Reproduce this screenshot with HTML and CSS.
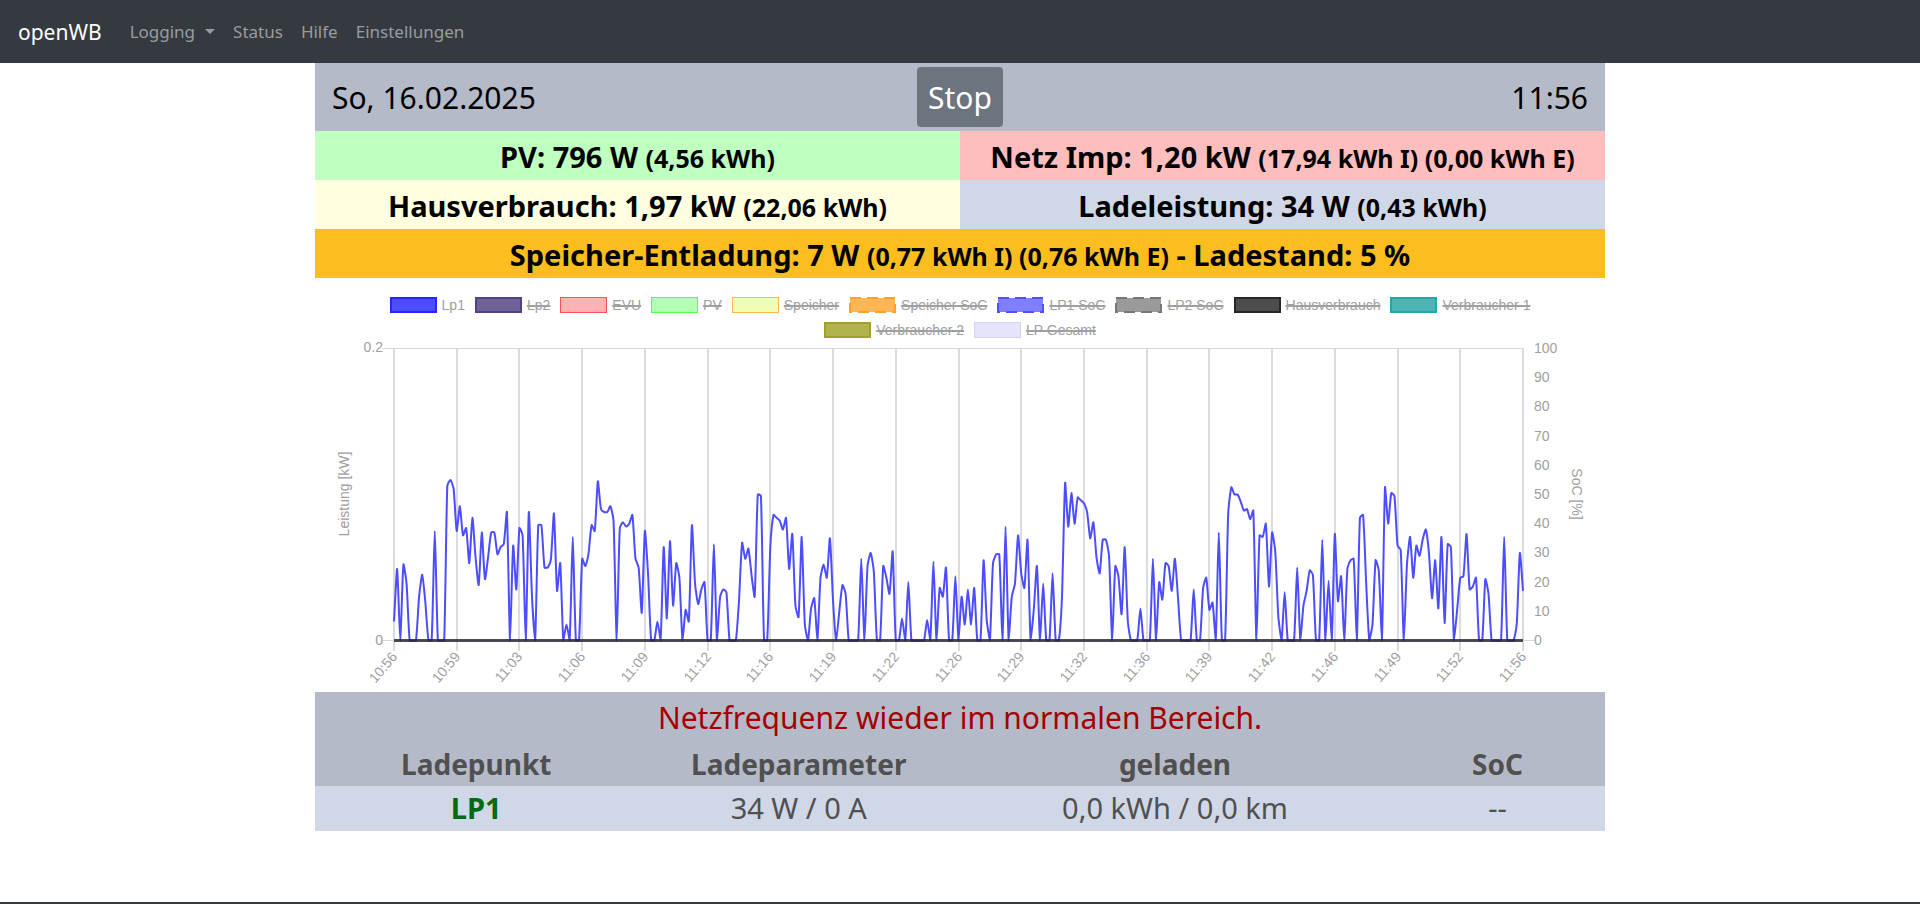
FILE: index.html
```html
<!DOCTYPE html>
<html lang="de">
<head>
<meta charset="utf-8">
<title>openWB</title>
<link rel="stylesheet" href="styles.css">
</head>
<body>
<nav class="navbar">
  <a class="brand" href="#">openWB</a>
  <button class="nav-item dropdown" type="button">Logging<span class="caret"></span></button>
  <a class="nav-item" href="#">Status</a>
  <a class="nav-item" href="#">Hilfe</a>
  <a class="nav-item" href="#">Einstellungen</a>
</nav>

<main class="container">
  <header class="topline">
    <span class="date">So, 16.02.2025</span>
    <button class="mode" type="button">Stop</button>
    <time class="clock">11:56</time>
  </header>

  <section class="values">
    <div class="value pv">PV: 796 W <small>(4,56 kWh)</small></div>
    <div class="value grid-import">Netz Imp: 1,20 kW <small>(17,94 kWh I) (0,00 kWh E)</small></div>
    <div class="value house">Hausverbrauch: 1,97 kW <small>(22,06 kWh)</small></div>
    <div class="value charge">Ladeleistung: 34 W <small>(0,43 kWh)</small></div>
    <div class="value storage">Speicher-Entladung: 7 W <small>(0,77 kWh I) (0,76 kWh E)</small> - Ladestand: 5 %</div>
  </section>

  <section class="chart">
    <div class="legend">
      <button type="button" class="key"><i class="box lp1"></i><span>Lp1</span></button>
      <button type="button" class="key off"><i class="box lp2"></i><span>Lp2</span></button>
      <button type="button" class="key off"><i class="box evu"></i><span>EVU</span></button>
      <button type="button" class="key off"><i class="box sun"></i><span>PV</span></button>
      <button type="button" class="key off"><i class="box battery"></i><span>Speicher</span></button>
      <button type="button" class="key off"><svg class="dash battery-soc" viewBox="0 0 47 16"><rect x="1" y="1" width="45" height="14"/></svg><span>Speicher SoC</span></button>
      <button type="button" class="key off"><svg class="dash lp1-soc" viewBox="0 0 47 16"><rect x="1" y="1" width="45" height="14"/></svg><span>LP1 SoC</span></button>
      <button type="button" class="key off"><svg class="dash lp2-soc" viewBox="0 0 47 16"><rect x="1" y="1" width="45" height="14"/></svg><span>LP2 SoC</span></button>
      <button type="button" class="key off"><i class="box home"></i><span>Hausverbrauch</span></button>
      <button type="button" class="key off"><i class="box load1"></i><span>Verbraucher 1</span></button>
      <button type="button" class="key off"><i class="box load2"></i><span>Verbraucher 2</span></button>
      <button type="button" class="key off"><i class="box total"></i><span>LP Gesamt</span></button>
    </div>
    <svg class="plot" id="plot" viewBox="0 0 1290 352" role="img" aria-label="Ladeleistung der letzten Stunde"></svg>
  </section>

  <p class="message">Netzfrequenz wieder im normalen Bereich.</p>

  <table class="points">
    <colgroup><col class="c3"><col class="c3"><col class="c4"><col class="c2"></colgroup>
    <thead>
      <tr><th>Ladepunkt</th><th>Ladeparameter</th><th>geladen</th><th>SoC</th></tr>
    </thead>
    <tbody>
      <tr><td class="name">LP1</td><td>34 W / 0 A</td><td>0,0 kWh / 0,0 km</td><td>--</td></tr>
    </tbody>
  </table>
</main>
<footer class="footer"></footer>
<script src="chart.js"></script>
</body>
</html>
```
FILE: styles.css
```css
* { box-sizing: border-box; }
body {
  margin: 0;
  min-height: 100vh;
  display: flex;
  flex-direction: column;
  background: #fff;
  color: #000;
  font-family: "Noto Sans", "Open Sans", sans-serif;
}
button { font: inherit; border: 0; padding: 0; cursor: pointer; }

.navbar {
  display: flex;
  align-items: center;
  gap: 18px;
  height: 63px;
  padding: 0 18px;
  background: #343a40;
  font-size: 17px;
}
.brand { margin-right: 10px; color: #fff; font-size: 21px; text-decoration: none; }
.nav-item { color: #999c9f; background: none; text-decoration: none; }
.dropdown { display: flex; align-items: center; gap: 10px; }
.caret { border: 5px solid transparent; border-top-color: currentColor; border-bottom: 0; }

.container { width: calc(100% - 30px); max-width: 1290px; margin: 0 auto; }

.topline {
  display: grid;
  grid-template-columns: 1fr auto 1fr;
  align-items: center;
  padding: 4px 17px;
  background: #b5bac9;
  font-size: 30px;
}
.mode { height: 60px; padding: 0 11px; border-radius: 4px; background: #6c757d; color: #fff; }
.clock { text-align: right; }

.values { display: grid; grid-template-columns: 1fr 1fr; }
.value { padding: 5px 0 3px; line-height: 41px; text-align: center; font-size: 29px; font-weight: 700; }
.value small { font-size: 25px; line-height: 1; }
.pv { background: #bfffbf; }
.grid-import { background: #febebe; }
.house { background: #ffffdf; }
.charge { background: #d0d7e6; }
.storage { grid-column: 1 / -1; background: #fcbe1e; }

.chart { padding-top: 19px; }
.legend { display: flex; flex-wrap: wrap; justify-content: center; gap: 9px 10px; }
.key {
  display: flex;
  align-items: center;
  gap: 5px;
  background: none;
  color: #a0a0a0;
  font: 14px/16px "Liberation Sans", Arial, sans-serif;
}
.off span { text-decoration: line-through 2px; }
.box { width: 47px; height: 16px; border: 2px solid; }
.dash { width: 47px; height: 16px; stroke-width: 2; stroke-dasharray: 11 6; }
.lp1 { background: #4d4dff; border-color: #2626ff; }
.lp2 { background: #706296; border-color: #544184; }
.evu { background: #ffb3b3; border: 1px solid #ff5050; }
.sun { background: #b3ffb3; border: 1px solid #50ff50; }
.battery { background: #eeffb3; border: 1px solid #ffb850; }
.battery-soc { fill: #ffb655; stroke: #ffa02d; }
.lp1-soc { fill: #8080ff; stroke: #5050ff; }
.lp2-soc { fill: #9a9a9d; stroke: #77777b; }
.home { background: #4d4d4d; border-color: #272727; }
.load1 { background: #4db3b3; border-color: #26a6a6; }
.load2 { background: #b3b34d; border-color: #a1a126; }
.total { background: #e4e4ff; border: 1px solid #d5d5ea; }

.plot { display: block; width: 100%; height: auto; margin-top: 2px; }
.plot text { fill: #a0a0a0; font: 14px "Liberation Sans", Arial, sans-serif; }
.grid { stroke: #dcdcdc; stroke-width: 2; }
.grid-h { stroke: #d8d8d8; stroke-width: 1; }
.line { fill: none; stroke: #4d4dff; stroke-width: 2; stroke-linejoin: round; }
.zero { stroke: #202028; stroke-width: 3; stroke-opacity: 0.8; }
.end { text-anchor: end; }
.mid { text-anchor: middle; }

.message {
  margin: 0;
  padding: 3px 17px 1px;
  background: #b5bac9;
  color: #a50000;
  font-size: 30px;
  line-height: 46px;
  text-align: center;
}
.points { width: 100%; table-layout: fixed; border-collapse: collapse; color: #505050; font-size: 29px; line-height: 44px; text-align: center; }
.points th { padding: 0; background: #b5bac9; font-size: 28px; }
.points td { padding: 0 0 1px; background: #d0d7e6; }
.points .name { color: #006b10; font-weight: 700; }
.c3 { width: 25%; }
.c4 { width: 33.33%; }
.c2 { width: 16.67%; }

.footer { height: 2px; margin-top: auto; background: #343a40; }
```
FILE: chart.js
```js
// Charging power of Lp1 in watts, one sample every ten seconds.
const lp1 = [
  13,49,0,52,39,0,0,0,30,45,26,0,0,75,0,0,0,106,110,104,
  75,92,72,77,53,84,57,38,74,42,57,74,74,59,64,66,88,0,65,35,
  77,72,0,88,30,0,79,79,50,50,55,87,34,53,0,11,0,71,0,0,
  56,51,59,79,75,109,90,88,88,92,82,0,77,81,78,80,86,56,50,19,
  75,46,0,0,13,0,64,15,68,24,53,43,0,21,13,79,39,25,35,40,
  0,0,66,0,30,35,33,0,0,0,27,67,56,63,45,30,100,99,0,0,
  64,86,84,82,76,84,49,73,24,16,71,11,0,22,29,0,43,52,43,70,
  27,0,20,38,32,0,0,0,0,56,0,51,60,47,0,0,51,43,32,61,
  0,0,15,0,40,0,0,0,0,0,14,0,54,0,36,30,50,0,0,44,
  0,30,11,35,11,36,0,0,55,14,0,53,59,59,0,78,0,30,39,72,
  46,36,69,0,21,51,0,39,0,0,46,0,0,30,108,78,101,80,98,96,
  94,88,70,81,57,46,69,69,58,0,51,44,18,64,13,0,0,0,22,0,
  0,0,56,0,40,28,53,51,34,56,29,0,0,0,0,35,0,0,36,43,
  21,26,0,74,0,0,87,105,100,100,95,89,90,83,89,0,72,71,80,37,
  74,61,16,0,33,0,0,0,50,0,24,34,48,45,0,0,69,0,41,0,
  73,27,44,0,49,55,56,0,84,86,39,0,11,55,48,0,105,80,101,99,
  65,62,0,52,71,43,65,58,69,76,60,29,55,22,71,12,66,64,0,21,
  43,44,73,35,37,43,0,0,42,32,0,0,0,0,71,0,0,0,11,60,
  34
];
const times = ["10:56","10:59","11:03","11:06","11:09","11:12","11:16","11:19","11:22","11:26",
  "11:29","11:32","11:36","11:39","11:42","11:46","11:49","11:52","11:56"];

const area = { left: 79, right: 1208, top: 8, bottom: 300 };
const maxPower = 200;
const svg = document.getElementById("plot");

function add(tag, attrs, text) {
  const el = document.createElementNS("http://www.w3.org/2000/svg", tag);
  for (const name in attrs) el.setAttribute(name, attrs[name]);
  if (text !== undefined) el.textContent = text;
  svg.appendChild(el);
}

// Vertical grid with time labels
times.forEach((t, i) => {
  const x = Math.round(area.left + (area.right - area.left) * i / (times.length - 1));
  add("line", { class: "grid", x1: x, x2: x, y1: area.top, y2: area.bottom + 11 });
  add("text", { class: "end", transform: `translate(${x + 4} 317) rotate(-50)` }, t);
});

add("line", { class: "grid-h", x1: 67, x2: area.right, y1: area.top + 0.5, y2: area.top + 0.5 });
add("line", { class: "grid-h", x1: 67, x2: area.right + 11, y1: area.bottom + 0.5, y2: area.bottom + 0.5 });
add("text", { class: "end", x: 68, y: area.top + 4 }, "0.2");
add("text", { class: "end", x: 68, y: area.bottom + 5 }, "0");

for (let soc = 0; soc <= 100; soc += 10) {
  const y = Math.round(area.bottom - (area.bottom - area.top) * soc / 100);
  add("text", { x: 1219, y: y + 5 }, soc);
}
add("text", { class: "mid", transform: "translate(34 154) rotate(-90)" }, "Leistung [kW]");
add("text", { class: "mid", transform: "translate(1257 154) rotate(90)" }, "SoC [%]");

// Smoothed power curve, control points kept inside the plot area
const pts = lp1.map((w, i) => ({
  x: area.left + (area.right - area.left) * i / (lp1.length - 1),
  y: area.bottom + 0.5 - (area.bottom - area.top) * w / maxPower
}));
const tension = 0.2;
const clamp = y => Math.min(area.bottom + 0.5, Math.max(area.top, y));
const ctrl = pts.map((p, i) => {
  const a = pts[i - 1] || p, b = pts[i + 1] || p;
  const d1 = Math.hypot(p.x - a.x, p.y - a.y), d2 = Math.hypot(b.x - p.x, b.y - p.y);
  const k1 = tension * d1 / (d1 + d2), k2 = tension * d2 / (d1 + d2);
  return {
    px: p.x - k1 * (b.x - a.x), py: clamp(p.y - k1 * (b.y - a.y)),
    nx: p.x + k2 * (b.x - a.x), ny: clamp(p.y + k2 * (b.y - a.y))
  };
});
let d = `M${pts[0].x} ${pts[0].y}`;
for (let i = 1; i < pts.length; i++) {
  d += `C${ctrl[i - 1].nx} ${ctrl[i - 1].ny} ${ctrl[i].px} ${ctrl[i].py} ${pts[i].x} ${pts[i].y}`;
}
add("path", { class: "line", d });
add("line", { class: "zero", x1: area.left, x2: area.right, y1: area.bottom + 0.5, y2: area.bottom + 0.5 });
```
